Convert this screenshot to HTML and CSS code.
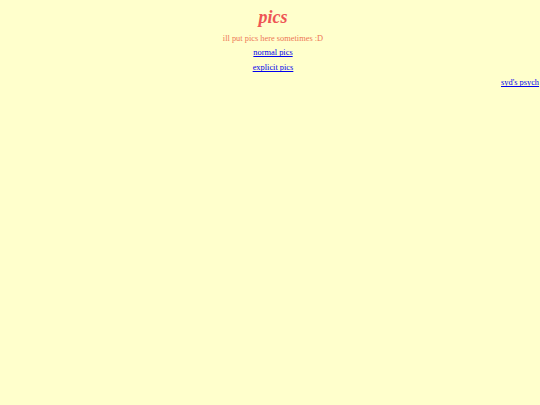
FILE: index.html
```html
<!DOCTYPE html>
<html>
<head>
<meta charset="utf-8">
<link rel="stylesheet" href="styles.css">
</head>
<body>
<div class="page">
<h1 class="title">pics</h1>
<p class="sub">ill put pics here sometimes :D</p>
<p class="link first"><a href="#">normal pics</a></p>
<p class="link"><a href="#">explicit pics</a></p>
</div>
<div class="ticker"><a href="#">syd's psych</a></div>
</body>
</html>
```
FILE: styles.css
```css
html, body {
  margin: 0;
  padding: 0;
  background: #ffffcc;
  overflow: hidden;
}
body {
  font-family: "Liberation Serif", serif;
  font-size: 8.4px;
  padding-top: 7px;
}
.page {
  text-align: center;
  padding-left: 6px;
}
.title {
  margin: 0;
  font-size: 18px;
  font-style: italic;
  font-weight: bold;
  color: #ee5555;
  line-height: 20px;
}
.sub {
  margin: 7px 0 0;
  color: #ee7755;
  line-height: 10px;
}
.link {
  margin: 5px 0 0;
  line-height: 10px;
}
.link.first {
  margin-top: 4px;
}
a {
  color: #0000ee;
  text-decoration-skip-ink: none;
}
.ticker {
  margin-top: 5px;
  padding-left: 501px;
  white-space: nowrap;
  line-height: 10px;
}
```
